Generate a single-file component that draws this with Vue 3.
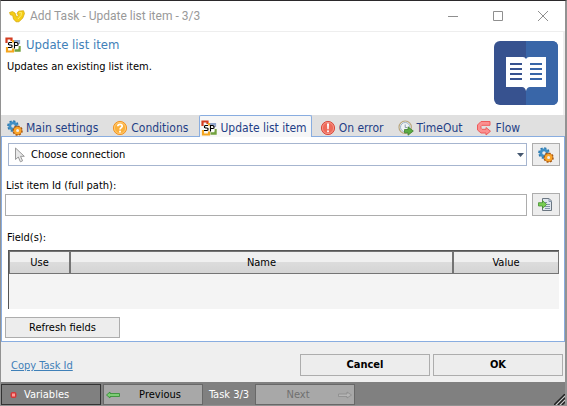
<script setup>
import { ref } from 'vue'

const tabs = [
  { label: 'Main settings', icon: 'gears' },
  { label: 'Conditions', icon: 'question' },
  { label: 'Update list item', icon: 'sp' },
  { label: 'On error', icon: 'error' },
  { label: 'TimeOut', icon: 'clock' },
  { label: 'Flow', icon: 'flow' },
]
const active = ref(2)
const itemId = ref('')
const connection = ref('')
</script>

<template>
  <svg class="defs" aria-hidden="true">
    <symbol id="gears" viewBox="0 0 16 16">
      <circle cx="6" cy="6" r="4.8" fill="none" stroke="#2b78ae" stroke-width="2" stroke-dasharray="2.2 1.5" />
      <circle cx="6" cy="6" r="3.2" fill="none" stroke="#3f8fc6" stroke-width="2.8" />
      <circle cx="10.6" cy="10.6" r="4.3" fill="#d9790f" stroke="#a85a14" stroke-width="1.8" stroke-dasharray="2 1.3" />
      <circle cx="10.6" cy="10.6" r="2.6" fill="#f0efee" stroke="#fba52a" stroke-width="2.2" />
    </symbol>
    <symbol id="question" viewBox="0 0 16 16">
      <circle cx="8" cy="8" r="6.6" fill="#fbb03c" stroke="#f39425" />
      <circle cx="8" cy="8" r="5.6" fill="none" stroke="#ffd083" stroke-width=".8" />
      <path d="M5.8 6.2C5.9 3.6 10.3 3.7 10.2 6.2C10.1 7.7 8 7.7 8 9.6" fill="none" stroke="#fff" stroke-width="1.7" />
      <rect x="7.1" y="10.7" width="1.8" height="1.8" fill="#fff" />
    </symbol>
    <symbol id="sp" viewBox="0 0 16 16">
      <path d="M1.5 6V1.5H6.5V4" fill="none" stroke="#d43c20" stroke-width="2.2" />
      <path d="M8 4H14V7" fill="none" stroke="#8fa4cb" stroke-width="2.2" />
      <path d="M2 10V14.5H8V3" fill="none" stroke="#f5a51d" stroke-width="2.2" />
      <path d="M9.5 13.5H14.5V9" fill="none" stroke="#72a13e" stroke-width="2.4" />
      <path d="M3 5.5H13.5V11.5H3Z" fill="#fff" opacity=".9" />
      <path d="M7 5.5H4.5L3.5 6V7.5L4.5 8H6L7 8.5V10L6 10.5H3M9.5 11.5V5.5H12L13 6.5V8L12 8.5H9.5" fill="none" stroke="#000" stroke-width="1.1" />
    </symbol>
    <symbol id="error" viewBox="0 0 16 16">
      <circle cx="8" cy="8" r="6.6" fill="#ee6a59" stroke="#d94b3d" />
      <circle cx="8" cy="8" r="5.6" fill="none" stroke="#f7a094" stroke-width=".8" />
      <path d="M7 3.5H9L8.7 9.2H7.3Z" fill="#fff" />
      <rect x="7.1" y="10.4" width="1.8" height="1.8" fill="#fff" />
    </symbol>
    <symbol id="clock" viewBox="0 0 16 16">
      <circle cx="7.2" cy="7.2" r="6.2" fill="#f0f3f5" stroke="#b9a67c" stroke-width="1.2" />
      <circle cx="7.2" cy="7.2" r="4.7" fill="none" stroke="#9fb1c6" />
      <path d="M7.2 4.5V7.5H9" fill="none" stroke="#8d9caf" />
      <path d="M6.5 9.5H10V6.8L15.3 11L10 15.2V12.8H6.5Z" fill="#5cad43" stroke="#3d7d2c" stroke-width=".8" />
    </symbol>
    <symbol id="flow" viewBox="0 0 16 16">
      <path d="M14 1.5H5L1.5 5V10L5 13H10V15L14.5 11.2L10 7.5V9.3H6L5 8.3V6.3L6 5.3H14Z" fill="#fb9090" stroke="#ee5a5a" />
    </symbol>
  </svg>

  <main class="window">
    <header class="titlebar">
      <svg class="logo" viewBox="0 0 16 13">
        <path d="M.5 2.5L3.5 1.5L6 3L7.6 7L9.3 5.5L8 3.2L9.5 1.2L14.5 .7L15.5 3.5L13.8 8L10 11.8H7L4.5 9L3.6 5.3L1.5 5Z" fill="#f5cd16" stroke="#d2a507" stroke-width=".7" />
        <path d="M10 2.8L12.5 2.5L12 5.5L9 9" fill="none" stroke="#ffed6b" />
      </svg>
      <h1>Add Task - Update list item - 3/3</h1>
      <button class="caption" aria-label="Minimize"><svg viewBox="0 0 10 10"><path d="M0 5.5H10" /></svg></button>
      <button class="caption" aria-label="Maximize"><svg viewBox="0 0 10 10"><path d="M.5 .5H9.5V9.5H.5Z" /></svg></button>
      <button class="caption" aria-label="Close"><svg viewBox="0 0 10 10"><path d="M0 0L10 10M10 0L0 10" /></svg></button>
    </header>

    <section class="intro">
      <div>
        <h2><svg class="icon"><use href="#sp" /></svg>Update list item</h2>
        <p>Updates an existing list item.</p>
      </div>
      <svg class="book" viewBox="0 0 64 64">
        <rect width="64" height="64" rx="6" fill="#37528f" />
        <path d="M32 0H58Q64 0 64 6V58Q64 64 58 64H32Z" fill="#3966a8" />
        <path d="M12 16H29Q31 16 32 18Q33 16 35 16H52V46H36Q33 46 32 50Q31 46 28 46H12Z" fill="#fff" />
        <path d="M16 23H28M16 28H28M16 33H28M16 38H28" stroke="#37528f" stroke-width="2" />
        <path d="M36 23H48M36 28H48M36 33H48M36 38H48" stroke="#3966a8" stroke-width="2" />
      </svg>
    </section>

    <nav class="tabs" role="tablist">
      <button v-for="(tab, i) in tabs" :key="tab.label" role="tab" :aria-selected="i === active" :class="['tab', { active: i === active }]" @click="active = i">
        <svg class="icon"><use :href="'#' + tab.icon" /></svg>{{ tab.label }}
      </button>
    </nav>

    <section class="panel">
      <div class="row">
        <div class="combo">
          <svg class="pointer" viewBox="0 0 12 16"><path d="M1.5 1V12.5L4.3 10L6.4 14.8L8.6 13.8L6.5 9.3H10.3Z" fill="#e8e8e8" stroke="#999" /></svg>
          <select v-model="connection" aria-label="Connection"><option value="">Choose connection</option></select>
          <svg class="caret" viewBox="0 0 7 4"><path d="M0 0H7L3.5 4Z" fill="#45576f" /></svg>
        </div>
        <button class="btn square" aria-label="Manage connections"><svg class="icon"><use href="#gears" /></svg></button>
      </div>

      <label for="item-id">List item Id (full path):</label>
      <div class="row">
        <input id="item-id" v-model="itemId" type="text">
        <button class="btn square" aria-label="Insert variable">
          <svg class="icon" viewBox="0 0 16 16">
            <path d="M4.5 1.5H11L13.5 4V13.5H4.5Z" fill="#dfe6ee" stroke="#6b7681" />
            <path d="M11 1.5V4.5H14M7 7.5H12M7 9.5H12M7 11.5H12M7 5.5H9" fill="none" stroke="#8496a9" />
            <path d="M.5 5.7H4.5V3.5L8.7 7.5L4.5 11.3V9H.5Z" fill="#78ce53" stroke="#458f30" stroke-width=".8" />
          </svg>
        </button>
      </div>

      <h3>Field(s):</h3>
      <div class="grid">
        <table>
          <thead><tr><th class="use">Use</th><th>Name</th><th class="value">Value</th></tr></thead>
        </table>
      </div>
      <button class="btn refresh">Refresh fields</button>
    </section>

    <section class="actions">
      <a href="#">Copy Task Id</a>
      <button class="btn confirm">Cancel</button>
      <button class="btn confirm">OK</button>
    </section>

    <footer class="statusbar">
      <button class="nav variables">
        <svg viewBox="0 0 8 8"><rect x=".5" y="1" width="6" height="6" rx="2" fill="#d43737" /><rect x="2" y="2.5" width="3" height="3" fill="#ff9a96" /></svg>Variables
      </button>
      <button class="nav">
        <svg class="arrow" viewBox="0 0 14 8"><path d="M.5 4L4 1V2.5H13.5V5.5H4V7Z" fill="#7ccc74" stroke="#2f8b30" stroke-width=".8" /></svg><span>Previous</span>
      </button>
      <span class="count">Task 3/3</span>
      <button class="nav" disabled>
        <span>Next</span><svg class="arrow" viewBox="0 0 14 8"><path d="M.5 3H9V1L13.5 4L9 7V5.5H.5Z" fill="#b5b5b5" stroke="#8b8b8b" stroke-width=".8" /></svg>
      </button>
      <svg class="grip" viewBox="0 0 11 11"><path d="M0 11L11 0M4 11L11 4M8 11L11 8" stroke="#222" stroke-width="1.4" /><path d="M2 11L11 2M6 11L11 6" stroke="#c8c8c8" /></svg>
    </footer>
  </main>
</template>

<style>
body { margin: 0; background: #999; }
</style>

<style scoped>
.defs { position: absolute; width: 0; height: 0; }
.window {
  box-sizing: border-box;
  min-height: 100vh;
  display: flex;
  flex-direction: column;
  border: 1px solid #929292;
  border-top-color: #2b292b;
  border-right-width: 2px;
  background: #efefef;
  color: #000;
  font: 11px/14px "DejaVu Sans Condensed", "DejaVu Sans", sans-serif;
  font-stretch: condensed;
}
button, input, select { font: inherit; color: inherit; margin: 0; box-sizing: border-box; }
h1, h2, h3, p { margin: 0; font-weight: normal; }
svg { display: block; flex: none; }
.icon { width: 16px; height: 16px; }

.titlebar { display: flex; align-items: center; height: 30px; padding-left: 8px; background: #fff; border-bottom: 1px solid #eee; }
.logo { width: 16px; height: 13px; margin-right: 5px; }
h1 { flex: 1; font: 12px/16px Roboto, sans-serif; color: #999; }
.caption { width: 45px; height: 30px; padding: 0; border: 0; background: none; display: grid; place-items: center; }
.caption svg { width: 10px; height: 10px; fill: none; stroke: #8f8f8f; }

.intro { display: flex; justify-content: space-between; height: 74px; padding: 9px 5px 0 4px; margin-right: 2px; background: #fff; }
h2 { display: flex; align-items: center; gap: 5px; height: 16px; margin-top: -4px; color: #3f80b8; font-size: 13px; line-height: 16px; }
p { margin: 7px 0 0 2px; }
.book { width: 64px; height: 64px; }

.tabs { display: flex; gap: 5px; height: 22px; padding-left: 3px; box-sizing: border-box; background: #e0e0e0; border-bottom: 1px solid #89ade0; }
.tab { display: flex; align-items: center; gap: 3px; height: 22px; padding: 3px 5px 0 2px; border: 1px solid transparent; border-bottom: 0; background: none; color: #1f3f86; font-size: 12px; white-space: nowrap; }
.tab.active { padding-left: 1px; padding-right: 4px; background: #f6f6f6; border-color: #89ade0; border-radius: 2px 2px 0 0; }

.panel { flex: 1; display: flex; flex-direction: column; padding: 6px 4px 3px 3px; background: #fff; border: 1px solid #89ade0; border-top: 0; }
.row { display: flex; align-items: center; gap: 5px; }
.btn { height: 21px; padding: 0; border: 1px solid #adadad; background: #ededed; }
.square { width: 28px; height: 23px; display: grid; place-items: center; }
.combo { flex: 1; display: flex; align-items: center; height: 23px; box-sizing: border-box; margin-left: 3px; padding: 0 2px 0 5px; border: 1px solid #a6b5cf; background: #fff; }
.pointer { width: 12px; height: 16px; margin-right: 5px; }
select { flex: 1; appearance: none; border: 0; padding: 0; background: none; outline: 0; }
.caret { width: 7px; height: 4px; }
label { margin: 13px 0 0 1px; }
input { flex: 1; min-width: 0; height: 22px; border: 1px solid #adadad; padding: 2px 4px; background: #fff; outline: 0; }
h3 { margin: 15px 0 5px 2px; font-size: 11px; }
.grid { flex: 1; margin: 0 1px 8px 3px; background: #f4f4f4; border-left: 1px solid #555; border-top: 1px solid #555; }
table { width: 100%; border-collapse: separate; border-spacing: 0; table-layout: fixed; }
th { height: 23px; padding: 0; box-sizing: border-box; font-weight: normal; border: 1px solid #747474; background: linear-gradient(#f0f0f0 50%, #dcdcdc 50%, #d4d4d4); }
.use { width: 61px; }
.value { width: 106px; }
.refresh { width: 115px; }

.actions { display: flex; align-items: center; gap: 3px; height: 40px; padding: 0 2px 0 10px; }
a { margin: 8px auto 0 0; color: #3f80b8; text-decoration: underline; }
.confirm { width: 130px; height: 22px; margin-top: 6px; font-weight: bold; }

.statusbar { display: flex; align-items: center; height: 23px; background: #808080; }
.nav { display: flex; align-items: center; width: 100px; height: 21px; margin-top: 2px; padding: 0 2px; border: 1px solid #686868; background: #a8a8a8; }
.nav span { flex: 1; text-align: center; }
.nav:disabled { color: #707070; }
.variables { margin-right: 2px; padding-left: 8px; gap: 6px; border-color: #333; background: #808080; color: #fff; }
.variables svg { width: 8px; height: 8px; }
.arrow { width: 14px; height: 8px; }
.count { width: 52px; margin-top: 2px; text-align: center; color: #fff; }
.grip { width: 11px; height: 11px; margin: auto 0 0 auto; }
</style>
